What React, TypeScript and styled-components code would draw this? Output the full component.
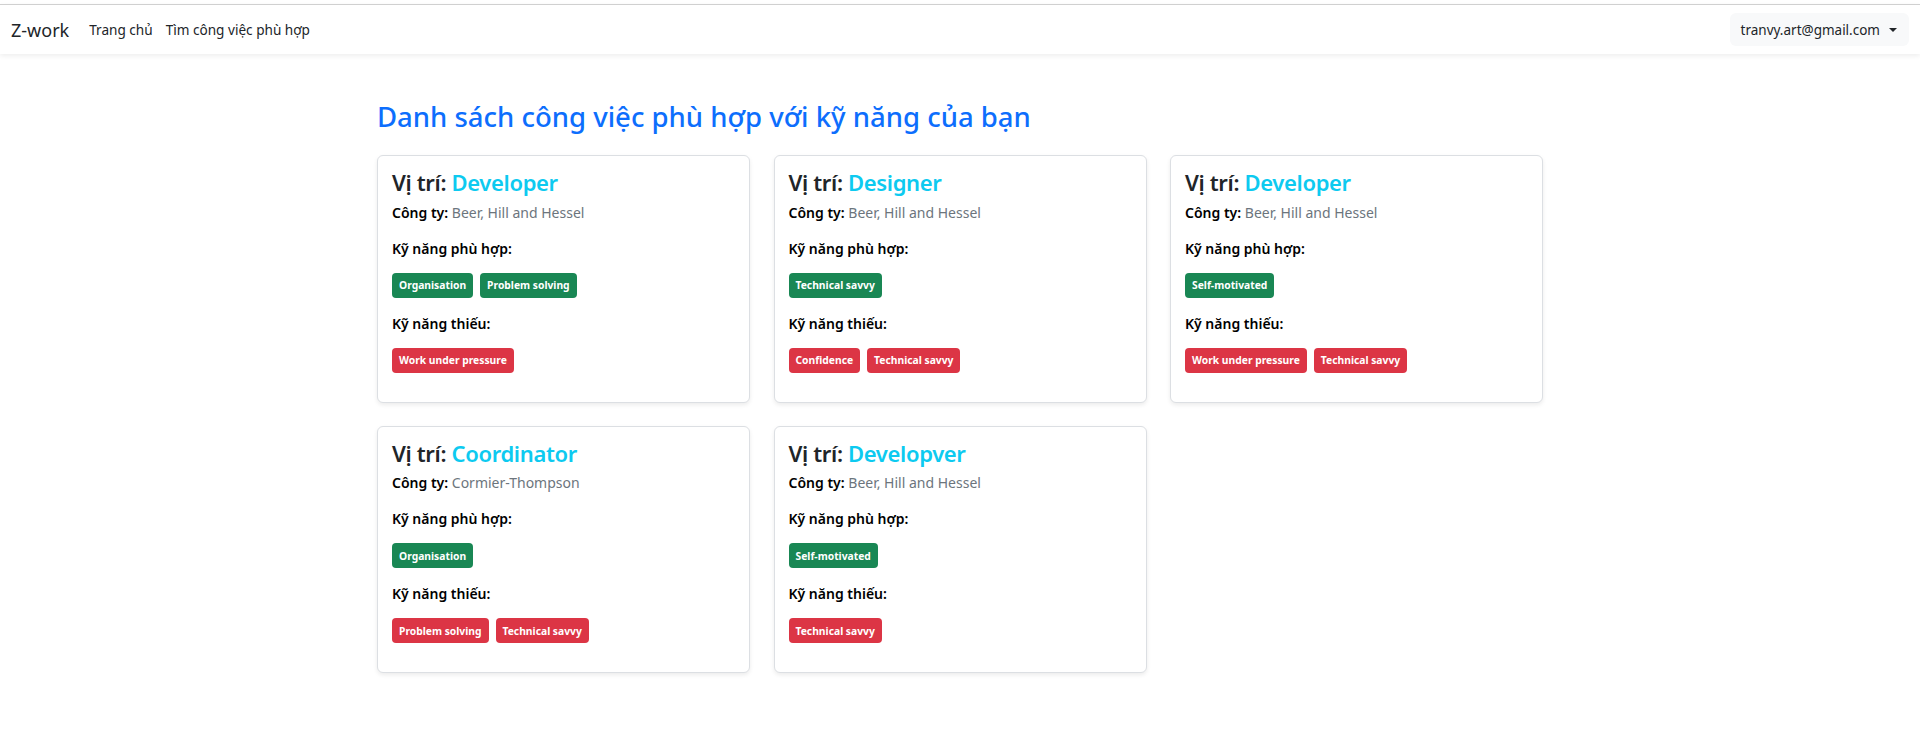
import React from 'react';
import styled, { createGlobalStyle } from 'styled-components';

const GlobalStyle = createGlobalStyle`
  html, body {
    margin: 0;
    padding: 0;
    background: #ffffff;
    font-family: 'Noto Sans', 'Open Sans', sans-serif;
    color: #212529;
  }
  * {
    box-sizing: border-box;
  }
`;

const TopStrip = styled.div`
  height: 4px;
  background: #ffffff;
`;

const NavBar = styled.nav`
  height: 50px;
  display: flex;
  align-items: center;
  justify-content: space-between;
  padding: 0 11px 0 11px;
  border-top: 1px solid #d0d0d0;
  background: #ffffff;
  box-shadow: 0 2px 5px rgba(0, 0, 0, 0.07);
`;

const NavLeft = styled.div`
  display: flex;
  align-items: center;
`;

const Brand = styled.a`
  font-size: 18px;
  color: #212529;
  text-decoration: none;
  margin-right: 20px;
`;

const NavLink = styled.a`
  font-size: 13.6px;
  color: #212529;
  text-decoration: none;
  margin-right: 13px;
`;

const UserButton = styled.button`
  display: flex;
  align-items: center;
  gap: 9px;
  height: 33px;
  padding: 0 12px 0 11px;
  border: none;
  border-radius: 6px;
  background: #f8f9fa;
  color: #212529;
  font-family: inherit;
  font-size: 13.5px;
`;

const Caret = styled.span`
  width: 0;
  height: 0;
  border-left: 4px solid transparent;
  border-right: 4px solid transparent;
  border-top: 4.5px solid #212529;
`;

const Container = styled.main`
  max-width: 1166px;
  margin: 0 auto;
  padding-bottom: 40px;
`;

const PageTitle = styled.h3`
  margin: 46px 0 22px;
  font-size: 27.5px;
  font-weight: 500;
  line-height: 1.2;
  color: #0d6efd;
`;

const Grid = styled.div`
  display: grid;
  grid-template-columns: repeat(3, 373px);
  column-gap: 23.5px;
  row-gap: 23px;
`;

const Card = styled.div`
  border: 1px solid #dcdfe3;
  border-radius: 6px;
  padding: 13px 14px 14px;
  background: #ffffff;
  box-shadow: 0 2px 4px rgba(0, 0, 0, 0.08);
`;

const JobTitle = styled.h4`
  margin: 0 0 5px;
  font-size: 22px;
  font-weight: 600;
  line-height: 1.25;
  letter-spacing: -0.35px;
  color: #212529;
`;

const Position = styled.span`
  color: #0dcaf0;
`;

const Company = styled.p`
  margin: 0;
  font-size: 14px;
  line-height: 1.5;
  color: #6c757d;

  b {
    color: #000000;
    font-weight: 600;
  }
`;

const Label = styled.p`
  margin: 15px 0 14px;
  font-size: 14px;
  font-weight: 600;
  line-height: 1.5;
  color: #000000;
`;

const BadgeRow = styled.div`
  display: flex;
  flex-wrap: wrap;
  gap: 7px;
  margin-bottom: 15px;
`;

const Badge = styled.span<{ $variant: 'ok' | 'miss' }>`
  display: inline-flex;
  align-items: center;
  height: 25px;
  padding: 0 7px;
  border-radius: 4px;
  font-size: 10.3px;
  font-weight: 700;
  color: #ffffff;
  background: ${(p) => (p.$variant === 'ok' ? '#198754' : '#dc3545')};
`;

type Job = {
  position: string;
  company: string;
  matched: string[];
  missing: string[];
};

const jobs: Job[] = [
  {
    position: 'Developer',
    company: 'Beer, Hill and Hessel',
    matched: ['Organisation', 'Problem solving'],
    missing: ['Work under pressure'],
  },
  {
    position: 'Designer',
    company: 'Beer, Hill and Hessel',
    matched: ['Technical savvy'],
    missing: ['Confidence', 'Technical savvy'],
  },
  {
    position: 'Developer',
    company: 'Beer, Hill and Hessel',
    matched: ['Self-motivated'],
    missing: ['Work under pressure', 'Technical savvy'],
  },
  {
    position: 'Coordinator',
    company: 'Cormier-Thompson',
    matched: ['Organisation'],
    missing: ['Problem solving', 'Technical savvy'],
  },
  {
    position: 'Developver',
    company: 'Beer, Hill and Hessel',
    matched: ['Self-motivated'],
    missing: ['Technical savvy'],
  },
];

const App: React.FC = () => {
  return (
    <>
      <GlobalStyle />
      <TopStrip />
      <NavBar>
        <NavLeft>
          <Brand href="#">Z-work</Brand>
          <NavLink href="#">Trang chủ</NavLink>
          <NavLink href="#">Tìm công việc phù hợp</NavLink>
        </NavLeft>
        <UserButton>
          tranvy.art@gmail.com
          <Caret />
        </UserButton>
      </NavBar>

      <Container>
        <PageTitle>Danh sách công việc phù hợp với kỹ năng của bạn</PageTitle>
        <Grid>
          {jobs.map((job, i) => (
            <Card key={i}>
              <JobTitle>
                Vị trí: <Position>{job.position}</Position>
              </JobTitle>
              <Company>
                <b>Công ty:</b> {job.company}
              </Company>
              <Label>Kỹ năng phù hợp:</Label>
              <BadgeRow>
                {job.matched.map((s) => (
                  <Badge key={s} $variant="ok">{s}</Badge>
                ))}
              </BadgeRow>
              <Label>Kỹ năng thiếu:</Label>
              <BadgeRow>
                {job.missing.map((s) => (
                  <Badge key={s} $variant="miss">{s}</Badge>
                ))}
              </BadgeRow>
            </Card>
          ))}
        </Grid>
      </Container>
    </>
  );
};

export default App;
